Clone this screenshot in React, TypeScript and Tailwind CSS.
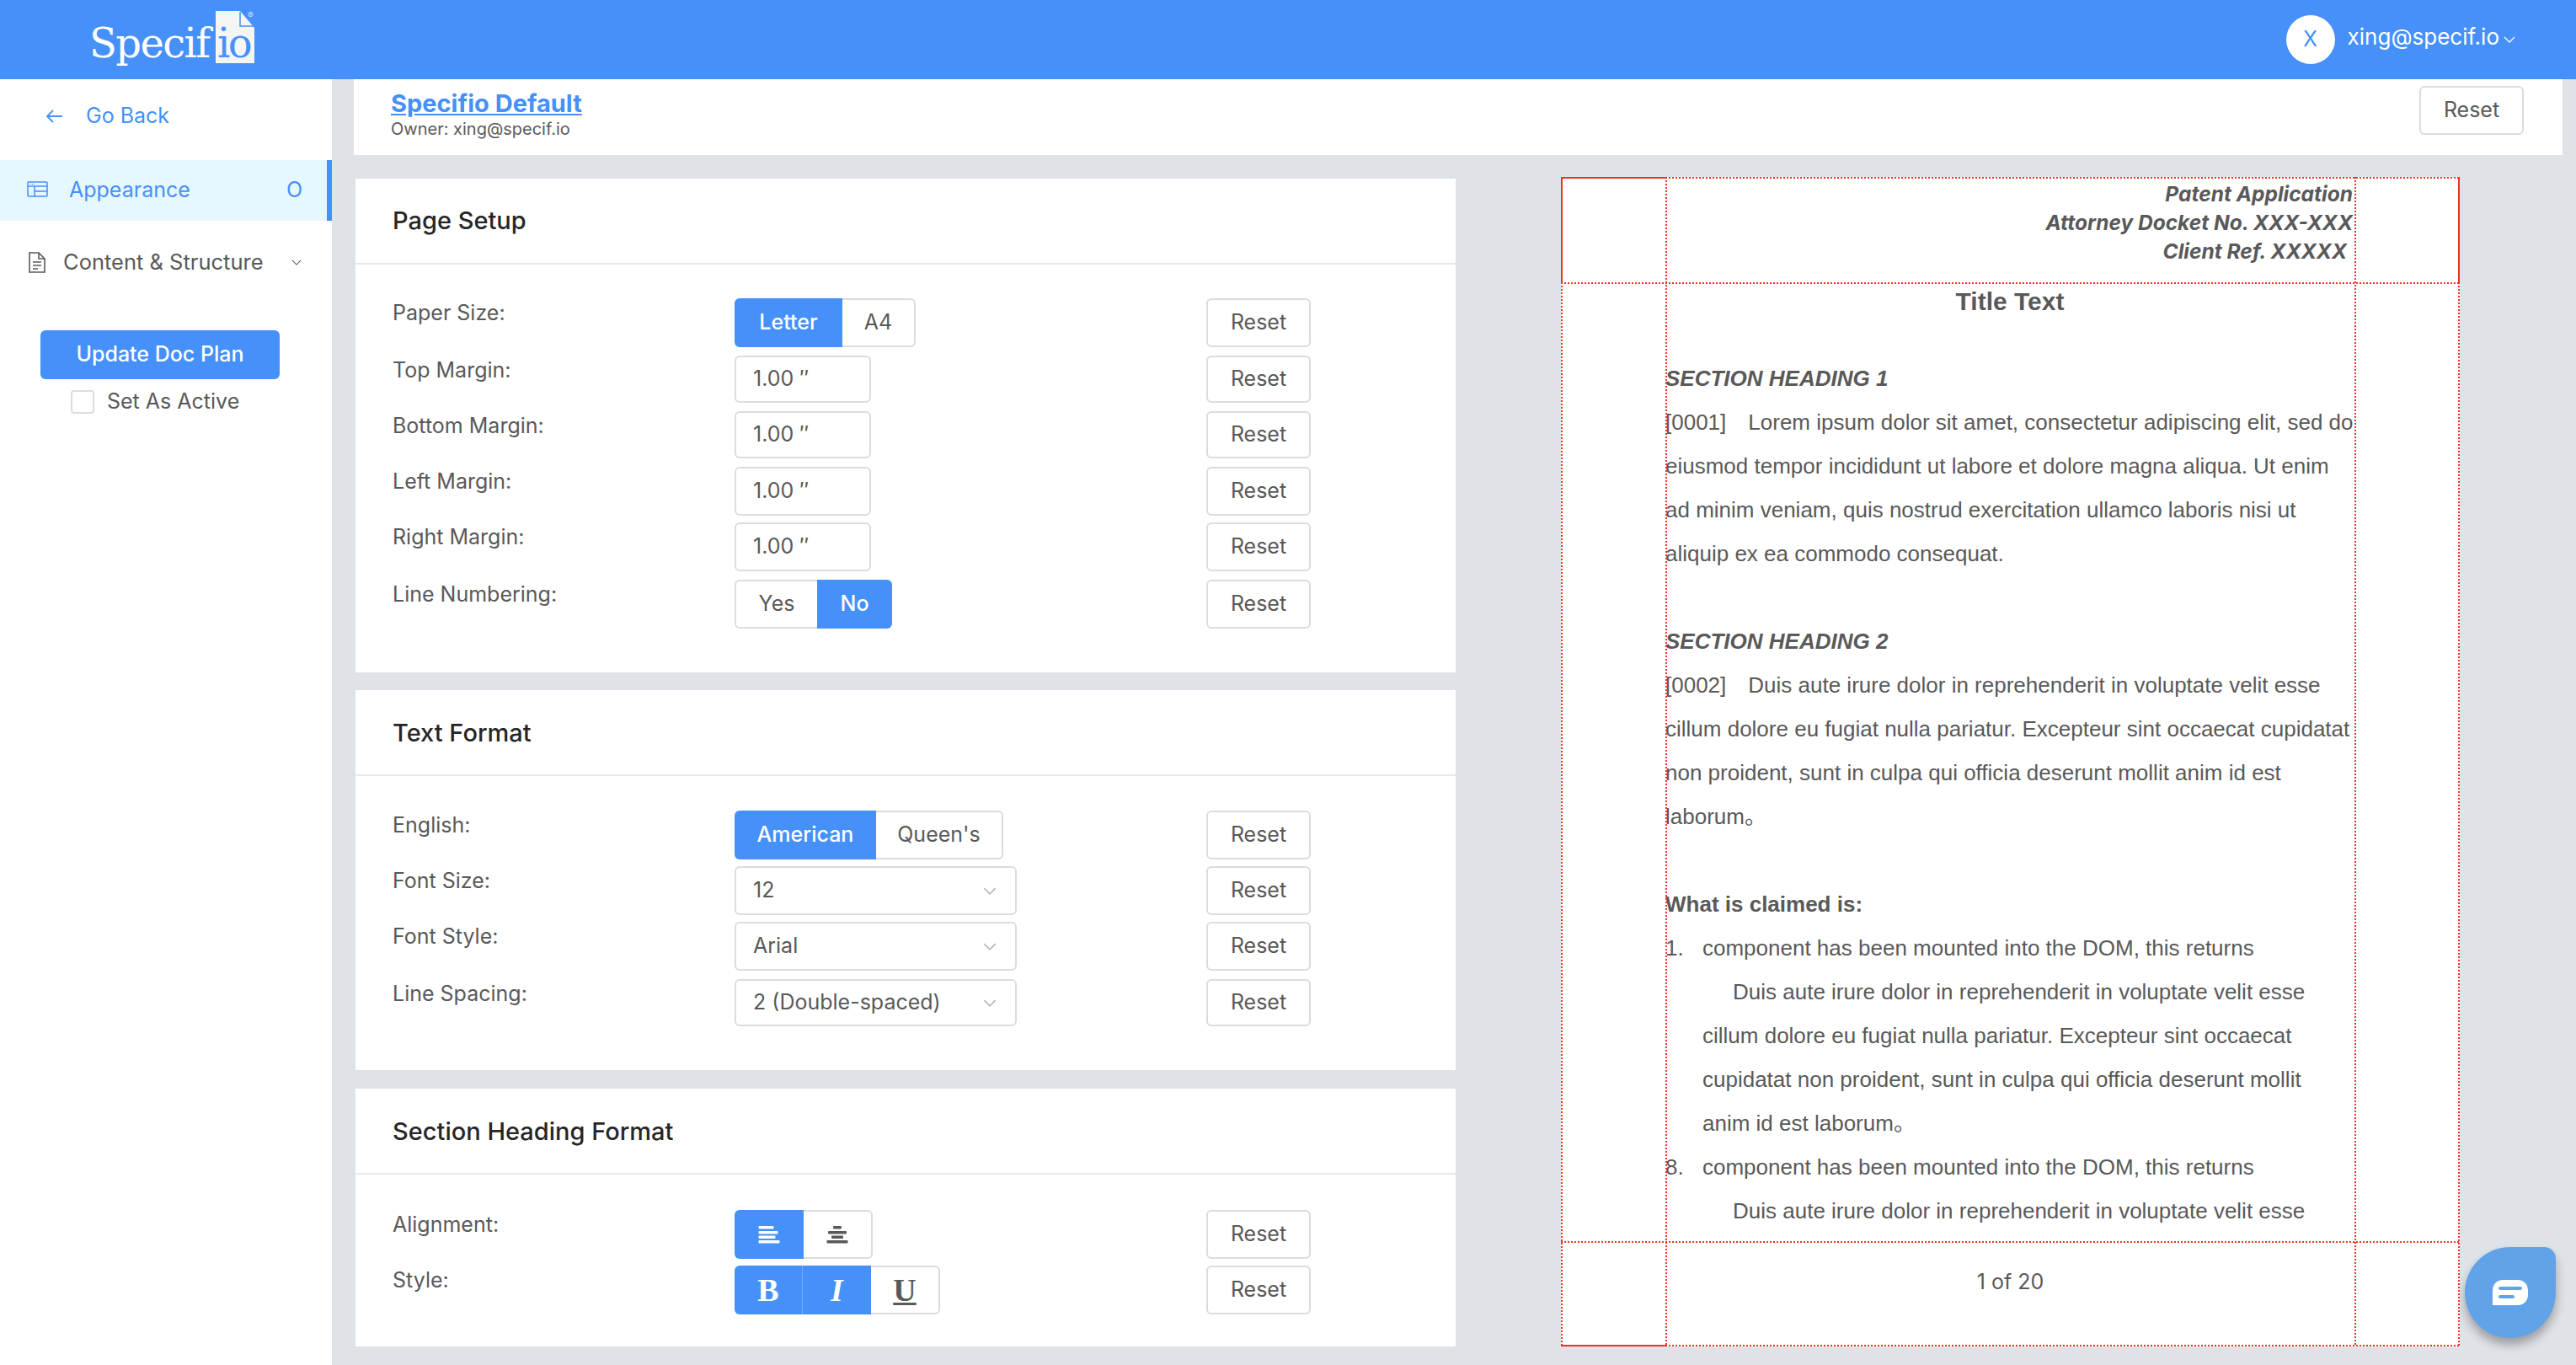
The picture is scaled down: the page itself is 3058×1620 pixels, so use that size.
import React from "react";

const inter = "font-['Inter','Liberation_Sans',sans-serif]";

const hDot = "h-[2px] bg-[repeating-linear-gradient(90deg,#ee3224_0_2.4px,transparent_2.4px_4px)]";
const vDot = "w-[2px] bg-[repeating-linear-gradient(180deg,#ee3224_0_2.4px,transparent_2.4px_4px)]";

function Reset() {
  return (
    <button className="flex h-full w-[124px] items-center justify-center rounded-[6px] border-2 border-[#dcdcdc] bg-white text-[25px] text-[#595959]">
      Reset
    </button>
  );
}

function Chevron({ className = "", color = "#595959" }: { className?: string; color?: string }) {
  return (
    <svg viewBox="0 0 14 8" fill="none" stroke={color} strokeWidth="1.3" className={className}>
      <path d="M1 1l6 6 6-6" />
    </svg>
  );
}

function Row({ label, h, children }: { label: string; h: string; children: React.ReactNode }) {
  return (
    <div className={`flex ${h}`}>
      <div className="w-[406px] text-[25px] leading-[35px] text-[#595959]">{label}</div>
      <div className="h-full w-[560px]">{children}</div>
      <Reset />
    </div>
  );
}

function Seg({ items, active }: { items: { t: React.ReactNode; w: string }[]; active: number[] }) {
  return (
    <div className="flex h-full">
      {items.map((it, i) => {
        const on = active.includes(i);
        const first = i === 0;
        const last = i === items.length - 1;
        const next = active.includes(i + 1);
        return (
          <div
            key={i}
            className={`flex h-full items-center justify-center text-[25px] ${it.w} ${first ? "rounded-l-[6px]" : ""} ${last ? "rounded-r-[6px]" : ""} ${
              on
                ? `bg-[#4590f9] font-medium text-white ${next ? "border-r border-[#77aefb]" : ""}`
                : `border-y-2 border-[#dcdcdc] bg-white text-[#595959] ${first ? "border-l-2" : ""} ${last ? "border-r-2" : ""}`
            }`}
          >
            {it.t}
          </div>
        );
      })}
    </div>
  );
}

function Input() {
  return (
    <div className="flex h-full w-[162px] items-center rounded-[6px] border-2 border-[#dcdcdc] bg-white pl-[20px] text-[25px] text-[#595959]">
      1.00 ″
    </div>
  );
}

function Select({ v }: { v: string }) {
  return (
    <div className="flex h-full w-[335px] items-center justify-between rounded-[6px] border-2 border-[#dcdcdc] bg-white pl-[20px] pr-[22px] text-[25px] text-[#595959]">
      <span>{v}</span>
      <Chevron className="h-[9px] w-[16px]" color="#b5b5b5" />
    </div>
  );
}

function Card({ title, children, pb, mt, body, head }: { title: string; children: React.ReactNode; pb: string; mt: string; body: string; head: string }) {
  return (
    <section className={`w-[1306px] bg-white ${mt} ${pb}`}>
      <h2 className={`flex h-[102px] items-center border-b-2 border-[#e8e8e8] pl-[44px] text-[29px] font-medium text-[#262626] ${head}`}>{title}</h2>
      <div className={`flex flex-col pl-[44px] ${body}`}>{children}</div>
    </section>
  );
}

function AlignIcon({ color, center }: { color: string; center?: boolean }) {
  return (
    <svg width="26" height="21" viewBox="0 0 26 21" fill={color}>
      {center ? (
        <>
          <rect x="8" y="0" width="10" height="3.5" rx="1" />
          <rect x="2" y="6" width="22" height="3.5" rx="1" />
          <rect x="6" y="11.5" width="14" height="3.5" rx="1" />
          <rect x="0.5" y="17" width="25" height="3.5" rx="1" />
        </>
      ) : (
        <>
          <rect x="0.5" y="0" width="18" height="3.5" rx="1" />
          <rect x="0.5" y="6" width="23" height="3.5" rx="1" />
          <rect x="0.5" y="11.5" width="20" height="3.5" rx="1" />
          <rect x="0.5" y="17" width="25" height="3.5" rx="1" />
        </>
      )}
    </svg>
  );
}

const serif = "font-['Liberation_Serif',serif] text-[38px] leading-none";

function Sidebar() {
  return (
    <aside className="flex w-[394px] shrink-0 flex-col bg-white">
      <div className="flex h-[96px] items-center pb-[8px] pl-[54px] text-[25px] text-[#4590f9]">
        <svg width="20" height="18" viewBox="0 0 20 18" fill="none" stroke="#4590f9" strokeWidth="1.8" className="mr-[28px]">
          <path d="M20 9H2M9 2L2 9l7 7" />
        </svg>
        Go Back
      </div>
      <div className="flex h-[72px] items-center border-r-[6px] border-[#4590f9] bg-[#e6f7ff] pl-[32px] pr-[29px] text-[25px] text-[#4590f9]">
        <svg width="25" height="19" viewBox="0 0 25 19" fill="none" stroke="#4590f9" strokeWidth="1.5" className="mb-[4px] mr-[25px]">
          <rect x="1" y="1" width="23" height="17" rx="1" />
          <path d="M1 6h23M9 6v12M9 12h15" />
          <path d="M4 3.5h5" strokeDasharray="1 1" strokeWidth="1" />
        </svg>
        <span>Appearance</span>
        <span className="ml-auto">O</span>
      </div>
      <div className="flex h-[98px] items-center pl-[34px] pr-[36px] text-[25.5px] text-[#595959]">
        <svg width="20" height="25" viewBox="0 0 20 25" fill="none" stroke="#595959" strokeWidth="1.6" className="mr-[21px]">
          <path d="M1 1h11l7 7v16H1zM12 1v7h7M5 12h10M5 16h10M5 20h6" />
        </svg>
        <span>Content &amp; Structure</span>
        <Chevron className="ml-auto h-[7px] w-[12px]" />
      </div>
      <button className="mx-[48px] mt-[32px] h-[58px] w-[284px] rounded-[6px] bg-[#4590f9] text-[25px] font-medium text-white">Update Doc Plan</button>
      <div className="mt-[8px] flex items-center pl-[84px] text-[25px] text-[#595959]">
        <span className="mr-[15px] h-[28px] w-[28px] rounded-[4px] border-2 border-[#dcdcdc] bg-white" />
        Set As Active
      </div>
    </aside>
  );
}

function Sheet() {
  const P = "h-[52px] leading-[52px] whitespace-nowrap";
  const red = "bg-[#ee3224]";
  return (
    <div className="relative ml-[125px] mt-[26px] h-[1388px] w-[1067px] shrink-0 self-start bg-white text-[#595959]">
      {/* margin guides */}
      <div className={`absolute left-0 top-0 h-[125px] w-[2px] ${red}`} />
      <div className={`absolute left-0 top-[125px] h-[1263px] ${vDot}`} />
      <div className={`absolute right-0 top-0 h-[125px] w-[2px] ${red}`} />
      <div className={`absolute right-0 top-[125px] h-[1263px] ${vDot}`} />
      <div className={`absolute left-[124px] top-0 h-full ${vDot}`} />
      <div className={`absolute left-[942px] top-0 h-full ${vDot}`} />
      <div className={`absolute left-0 top-0 h-[2px] w-[124px] ${red}`} />
      <div className={`absolute left-[124px] right-0 top-0 ${hDot}`} />
      <div className={`absolute inset-x-0 top-[125px] ${hDot}`} />
      <div className={`absolute inset-x-0 top-[1263px] ${hDot}`} />
      <div className={`absolute bottom-0 left-0 h-[2px] w-[124px] ${red}`} />
      <div className={`absolute bottom-0 left-[124px] right-0 ${hDot}`} />

      <div className="h-[125px] pr-[127px] pt-[3px] text-right text-[24.5px] font-bold italic leading-[34px]">
        <div>Patent Application</div>
        <div>Attorney Docket No. XXX-XXX</div>
        <div className="pr-[7px]">Client Ref. XXXXX</div>
      </div>
      <div className="h-[1138px] overflow-hidden pl-[124px] pr-[125px] font-['Liberation_Sans','Noto_Sans_CJK_SC',sans-serif] text-[26px]">
        <div className="h-[88px] pt-[1px] text-center text-[30px] font-bold leading-[44px]">Title Text</div>
        <div className={`${P} font-bold italic`}>SECTION HEADING 1</div>
        <div className={P}>[0001]<span className="inline-block w-[26px]" />Lorem ipsum dolor sit amet, consectetur adipiscing elit, sed do</div>
        <div className={P}>eiusmod tempor incididunt ut labore et dolore magna aliqua. Ut enim</div>
        <div className={P}>ad minim veniam, quis nostrud exercitation ullamco laboris nisi ut</div>
        <div className={P}>aliquip ex ea commodo consequat.</div>
        <div className="h-[52px]" />
        <div className={`${P} font-bold italic`}>SECTION HEADING 2</div>
        <div className={P}>[0002]<span className="inline-block w-[26px]" />Duis aute irure dolor in reprehenderit in voluptate velit esse</div>
        <div className={P}>cillum dolore eu fugiat nulla pariatur. Excepteur sint occaecat cupidatat</div>
        <div className={P}>non proident, sunt in culpa qui officia deserunt mollit anim id est</div>
        <div className={P}>laborum。</div>
        <div className="h-[52px]" />
        <div className={`${P} font-bold`}>What is claimed is:</div>
        <div className={`${P} flex`}><span className="w-[44px]">1.</span>component has been mounted into the DOM, this returns</div>
        <div className={`${P} pl-[80px]`}>Duis aute irure dolor in reprehenderit in voluptate velit esse</div>
        <div className={`${P} pl-[44px]`}>cillum dolore eu fugiat nulla pariatur. Excepteur sint occaecat</div>
        <div className={`${P} pl-[44px]`}>cupidatat non proident, sunt in culpa qui officia deserunt mollit</div>
        <div className={`${P} pl-[44px]`}>anim id est laborum。</div>
        <div className={`${P} flex`}><span className="w-[44px]">8.</span>component has been mounted into the DOM, this returns</div>
        <div className={`${P} pl-[80px]`}>Duis aute irure dolor in reprehenderit in voluptate velit esse</div>
      </div>
      <div className="pt-[31px] text-center text-[25px] leading-[34px]">1 of 20</div>
    </div>
  );
}

function Logo() {
  return (
    <div className="relative ml-[106px] h-full w-[200px]">
      <span className="absolute left-0 top-[26px] font-['DejaVu_Serif',serif] text-[48px] leading-[50px] tracking-[-1.6px] text-white">Specif</span>
      <svg viewBox="0 0 46 62" width="46" height="62" className="absolute left-[150px] top-[13px]">
        <path d="M0 0h29l17 20v42H0z" fill="#f5f5f5" />
        <path d="M29 1v17h16" fill="none" stroke="#4590f9" strokeWidth="1.5" />
      </svg>
      <span className="absolute left-[152px] top-[26px] font-['DejaVu_Serif',serif] text-[48px] leading-[50px] tracking-[-2.5px] text-[#4590f9]">io</span>
      <span className="absolute left-[188px] top-[12px] text-[10px] leading-[12px] text-[#cfe1fc]">®</span>
    </div>
  );
}

export default function App() {
  return (
    <div className={`relative flex h-[1620px] w-[3058px] flex-col overflow-hidden bg-[#dfe2e7] ${inter}`}>
      <header className="flex h-[94px] shrink-0 items-center bg-[#4590f9]">
        <Logo />
        <div className="ml-auto flex items-center pr-[72px]">
          <div className="flex h-[58px] w-[58px] items-center justify-center rounded-full bg-white text-[25px] text-[#4590f9]">X</div>
          <span className="ml-[15px] pb-[8px] text-[26px] text-white">xing@specif.io</span>
          <Chevron className="ml-[5px] h-[8px] w-[14px]" color="#fff" />
        </div>
      </header>
      <div className="flex min-h-0 flex-1">
        <Sidebar />
        <main className="flex min-w-0 flex-1 flex-col">
          <div className="ml-[26px] mr-[16px] flex h-[90px] shrink-0 items-start justify-between bg-white pl-[44px] pr-[46px]">
            <div>
              <a className="block pt-[11px] text-[29px] font-bold leading-[36px] text-[#4590f9] underline">Specifio Default</a>
              <div className="text-[20px] leading-[24px] text-[#595959]">Owner: xing@specif.io</div>
            </div>
            <button className="mt-[8px] h-[58px] w-[124px] rounded-[6px] border-2 border-[#dcdcdc] text-[25px] text-[#595959]">Reset</button>
          </div>
          <div className="flex min-h-0 flex-1">
            <div className="ml-[28px] flex w-[1306px] shrink-0 flex-col">
              <Card title="Page Setup" head="pt-0" mt="mt-[28px]" pb="pb-[52px]" body="gap-[10px] pt-[40px]">
                <Row label="Paper Size:" h="h-[58px]"><Seg active={[0]} items={[{ t: "Letter", w: "w-[128px]" }, { t: "A4", w: "w-[87px]" }]} /></Row>
                <Row label="Top Margin:" h="h-[56px]"><Input /></Row>
                <Row label="Bottom Margin:" h="h-[56px]"><Input /></Row>
                <Row label="Left Margin:" h="mb-[-2px] h-[58px]"><Input /></Row>
                <Row label="Right Margin:" h="h-[58px]"><Input /></Row>
                <Row label="Line Numbering:" h="h-[58px]"><Seg active={[1]} items={[{ t: "Yes", w: "w-[98px]" }, { t: "No", w: "w-[89px]" }]} /></Row>
              </Card>
              <Card title="Text Format" head="pt-[2px]" mt="mt-[21px]" pb="pb-[52px]" body="gap-[8px] pt-[41px]">
                <Row label="English:" h="h-[58px]"><Seg active={[0]} items={[{ t: "American", w: "w-[168px]" }, { t: "Queen's", w: "w-[151px]" }]} /></Row>
                <Row label="Font Size:" h="h-[58px]"><Select v="12" /></Row>
                <Row label="Font Style:" h="h-[58px]"><Select v="Arial" /></Row>
                <Row label="Line Spacing:" h="mt-[2px] h-[56px]"><Select v="2 (Double-spaced)" /></Row>
              </Card>
              <Card title="Section Heading Format" head="pt-[2px]" mt="mt-[22px]" pb="pb-[38px]" body="gap-[8px] pt-[42px]">
                <Row label="Alignment:" h="h-[58px]">
                  <Seg active={[0]} items={[{ t: <AlignIcon color="#fff" />, w: "w-[82px]" }, { t: <AlignIcon color="#595959" center />, w: "w-[82px]" }]} />
                </Row>
                <Row label="Style:" h="h-[58px]">
                  <Seg
                    active={[0, 1]}
                    items={[
                      { t: <span className={`${serif} font-bold`}>B</span>, w: "w-[81px]" },
                      { t: <span className={`${serif} font-bold italic`}>I</span>, w: "w-[81px]" },
                      { t: <span className={`${serif} font-bold underline`}>U</span>, w: "w-[82px]" },
                    ]}
                  />
                </Row>
              </Card>
            </div>
            <Sheet />
          </div>
        </main>
      </div>
      <div className="absolute left-[2926px] top-[1480px] flex h-[108px] w-[108px] items-center justify-center rounded-[54px] rounded-tr-[14px] bg-[#60a3e8] shadow-[0_8px_12px_rgba(0,0,0,0.3)]">
        <svg width="42" height="30" viewBox="0 0 42 30">
          <path d="M0 30V12A12 12 0 0 1 12 0h18a12 12 0 0 1 12 12v6a12 12 0 0 1-12 12z" fill="#fff" />
          <rect x="7" y="8" width="28" height="4" rx="2" fill="#60a3e8" />
          <rect x="7" y="18" width="19" height="4" rx="2" fill="#60a3e8" />
        </svg>
      </div>
    </div>
  );
}
